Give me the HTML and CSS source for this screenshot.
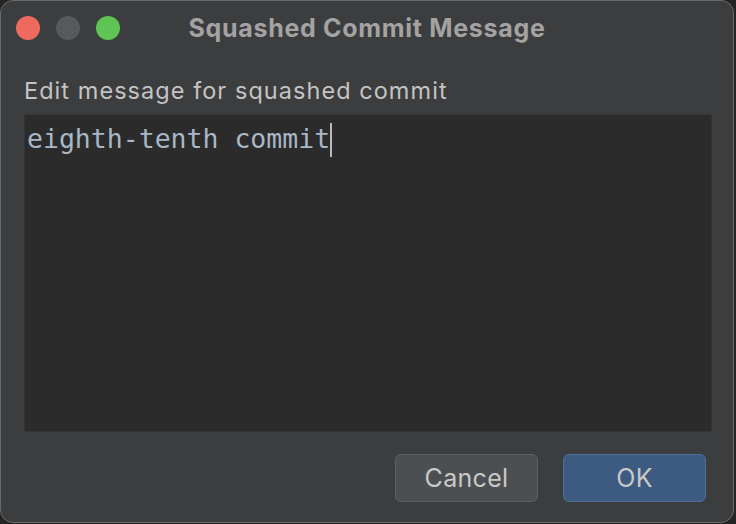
FILE: index.html
```html
<!DOCTYPE html>
<html>
<head>
<meta charset="utf-8">
<link rel="stylesheet" href="styles.css">
</head>
<body>
<div class="window">
  <div class="titlebar">
    <div class="lights">
      <span class="light red"></span>
      <span class="light gray"></span>
      <span class="light green"></span>
    </div>
    <div class="title">Squashed Commit Message</div>
  </div>
  <div class="content">
    <div class="label">Edit message for squashed commit</div>
    <div class="editor"><span class="code">eighth-tenth commit</span><span class="caret"></span></div>
    <div class="buttons">
      <button class="btn cancel">Cancel</button>
      <button class="btn ok">OK</button>
    </div>
  </div>
</div>
</body>
</html>
```
FILE: styles.css
```css
html, body {
  margin: 0;
  padding: 0;
  background: #242424;
  width: 736px;
  height: 524px;
  overflow: hidden;
}
.window {
  box-sizing: border-box;
  width: 734px;
  height: 523px;
  background: #3c3d3f;
  border: 1px solid #68696b;
  border-radius: 13px;
  display: flex;
  flex-direction: column;
  font-family: Inter, "Noto Sans", sans-serif;
}
.titlebar {
  position: relative;
  height: 55px;
  display: flex;
  align-items: center;
  justify-content: center;
}
.lights {
  position: absolute;
  left: 15px;
  top: 15px;
  display: flex;
  gap: 16px;
}
.light {
  width: 24px;
  height: 24px;
  border-radius: 50%;
  display: block;
}
.red { background: #ee6a5f; }
.gray { background: #58595b; }
.green { background: #5fc454; }
.title {
  color: #a3a3a3;
  font-weight: 700;
  font-size: 25px;
  letter-spacing: 0.7px;
  margin-top: -2px;
}
.content {
  flex: 1;
  display: flex;
  flex-direction: column;
  padding: 20px 21px 20px 23px;
}
.label {
  color: #c4c4c4;
  font-size: 23.5px;
  letter-spacing: 1.05px;
  line-height: 30px;
  margin-bottom: 8px;
}
.editor {
  height: 318px;
  background: #2b2b2b;
  border: 1px solid #343434;
  display: flex;
  align-items: flex-start;
  padding: 6px 0 0 2px;
  box-sizing: border-box;
}
.code {
  font-family: "DejaVu Sans Mono", "Liberation Mono", monospace;
  font-size: 26.5px;
  line-height: 36px;
  color: #a9b7c6;
}
.caret {
  width: 2px;
  height: 34px;
  background: #bbbbbb;
  margin-left: 0;
  margin-top: 2px;
}
.buttons {
  display: flex;
  justify-content: flex-end;
  gap: 25px;
  margin-top: 22px;
  padding-right: 6px;
}
.btn {
  width: 143px;
  height: 48px;
  box-sizing: border-box;
  border-radius: 6px;
  font-family: Inter, "Noto Sans", sans-serif;
  font-size: 25px;
  letter-spacing: 0.3px;
  color: #c8c8c8;
  padding: 0;
}
.cancel {
  background: #4c4f51;
  border: 1px solid #5e6163;
}
.ok {
  background: #3d5a80;
  border: 1px solid #4e6f99;
}
```
